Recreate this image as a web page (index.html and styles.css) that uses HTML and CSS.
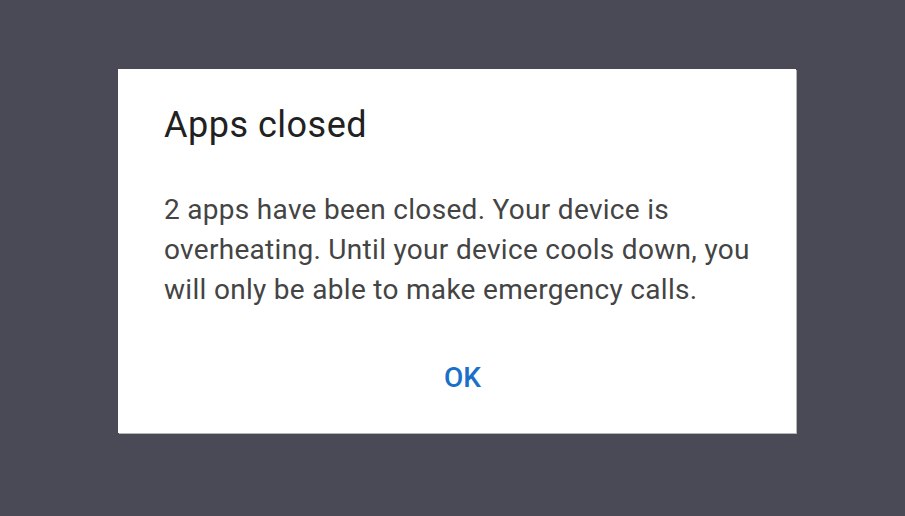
FILE: index.html
```html
<!DOCTYPE html>
<html>
<head>
<meta charset="utf-8">
<link rel="stylesheet" href="styles.css">
</head>
<body>
<div class="dialog">
  <h1 class="title">Apps closed</h1>
  <p class="message">2 apps have been closed. Your device is overheating. Until your device cools down, you will only be able to make emergency calls.</p>
  <div class="actions">
    <button class="ok-btn">OK</button>
  </div>
</div>
</body>
</html>
```
FILE: styles.css
```css
html, body {
  margin: 0;
  height: 100%;
}
body {
  background: #494a56;
  font-family: Roboto, "Liberation Sans", sans-serif;
  padding: 69px 0 0 118px;
  box-sizing: border-box;
}
.dialog {
  width: 678px;
  height: 364px;
  box-sizing: border-box;
  background: #ffffff;
  box-shadow: 1px 1px 0 #b5b5b8;
  padding: 34px 46px 0 46px;
  display: flex;
  flex-direction: column;
}
.title {
  margin: 0;
  font-size: 36px;
  line-height: 44px;
  font-weight: 400;
  letter-spacing: 0.5px;
  color: #212121;
}
.message {
  margin: 43px 0 0 0;
  font-size: 28px;
  line-height: 40px;
  letter-spacing: 0.3px;
  color: #444444;
}
.actions {
  margin-top: 48px;
  display: flex;
  justify-content: center;
}
.ok-btn {
  background: none;
  border: none;
  padding: 0 0 0 11px;
  font-family: Roboto, "Liberation Sans", sans-serif;
  font-size: 28px;
  line-height: 40px;
  font-weight: 500;
  color: #1a6fc8;
  cursor: pointer;
}
```
